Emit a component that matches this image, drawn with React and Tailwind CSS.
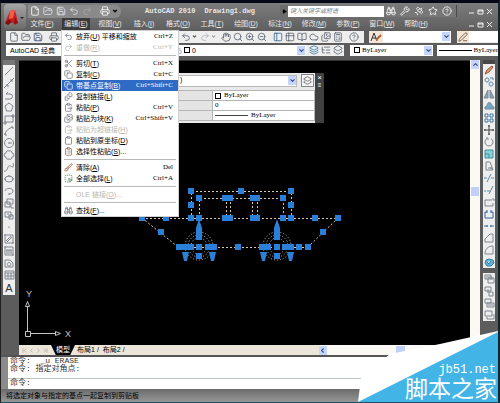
import React from 'react';
import {
  File, FolderOpen, Save, Printer, Undo2, Redo2, Hand, Search, ZoomIn, ZoomOut,
  Scissors, Copy, ClipboardPaste, Clipboard, ClipboardList, Brush, MousePointerSquareDashed,
  Wrench, Satellite, Star, CircleHelp, Binoculars, ChevronDown, ChevronUp, ChevronLeft,
  ChevronRight, ChevronFirst, ChevronLast, PanelLeft, Table2, BookOpen, Cloud, Images, Calculator,
  Layers, Layers2, ListTree, PenLine, LockOpen, FileStack, Play,
} from 'lucide-react';

const MENUS = [
  ['文件', 'F'], ['编辑', 'E'], ['视图', 'V'], ['插入', 'I'], ['格式', 'O'], ['工具', 'T'],
  ['绘图', 'D'], ['标注', 'N'], ['修改', 'M'], ['参数', 'P'], ['窗口', 'W'], ['帮助', 'H'],
];

const EDIT_MENU = [
  { icon: Undo2, label: '放弃', hot: 'U', after: ' 平移和缩放', keys: 'Ctrl+Z' },
  { icon: Redo2, label: '重做', hot: 'R', keys: 'Ctrl+Y', disabled: true },
  null,
  { icon: Scissors, label: '剪切', hot: 'T', keys: 'Ctrl+X' },
  { icon: Copy, label: '复制', hot: 'C', keys: 'Ctrl+C' },
  { icon: Copy, label: '带基点复制', hot: 'B', keys: 'Ctrl+Shift+C', active: true },
  { icon: FileStack, label: '复制链接', hot: 'L' },
  { icon: ClipboardPaste, label: '粘贴', hot: 'P', keys: 'Ctrl+V' },
  { icon: Images, label: '粘贴为块', hot: 'K', keys: 'Ctrl+Shift+V' },
  { icon: ClipboardPaste, label: '粘贴为超链接', hot: 'H', disabled: true },
  { icon: Clipboard, label: '粘贴到原坐标', hot: 'D' },
  { icon: ClipboardList, label: '选择性粘贴', hot: 'S', after: '...', tint: 'text-[#8a6a4a]' },
  null,
  { icon: Brush, label: '清除', hot: 'A', keys: 'Del', tint: 'text-[#a4512a]' },
  { icon: MousePointerSquareDashed, label: '全部选择', hot: 'L', keys: 'Ctrl+A', tint: 'text-[#3d7a3d]' },
  null,
  { label: 'OLE 链接', hot: 'O', after: '...', disabled: true },
  null,
  { icon: Binoculars, label: '查找', hot: 'F', after: '...' },
];

// every glyph sits in a 12x12 box
const DRAW_TOOLS = [
  ['直线', <path d="M2 10 10 2" />],
  ['构造线', <path d="M1 11 11 1M3 8h2v2M7 3h2v2" />],
  ['多段线', <path d="M2 10h5a2 2 0 0 0 0-5H3M3 5l2-2" />],
  ['正多边形', <path d="m6 2 4 3-1.5 5h-5L2 5z" />],
  ['矩形', <path d="M2 3h8v6H2zM1 9h2v2H1zM9 2h2v2H9z" />],
  ['圆弧', <path d="M2 10c0-4 4-7 8-8M1 9h2v2M9 1v2h2" />],
  ['圆', <path d="M6 1.5a4.5 4.5 0 1 0 .1 0M6 6h3M6 5v2" />],
  ['修订云线', <path d="M3 4a2 2 0 0 1 3-2 2 2 0 0 1 3 2 2 2 0 0 1 0 4 2 2 0 0 1-3 2 2 2 0 0 1-3-2 2 2 0 0 1 0-4" />],
  ['样条曲线', <path d="M1 10c3 1 3-2 4-4s3-1 4 0 2-2 1-4" />],
  ['椭圆', <path d="M2 6a4 3 0 1 0 8 0 4 3 0 1 0-8 0M6 2v2M1 6h2M9 6h2" />],
  ['椭圆弧', <path d="M2 6c0-3 8-4 8 0 0 2-2 3-4 3M6 8v2" />],
  ['插入块', <path d="M4 2h6v5H4zM2 5h5v5H2zM8 8v3h3" />],
  ['创建块', <path d="M2 3h6v5H2zM6 6h4v4H6zM4 5h2" />],
  ['点', <path d="M6 5.5v1.5" />],
  ['图案填充', <path d="M2 2h8v8H2zM3 8l5-5M4 9l5-5M1 2h2M9 10h2" />],
  ['渐变色', <path d="M2 2h8v8H2zM3 5h6M3 6h6M3 8h6M1 2h2M9 10h2" />],
  ['面域', <path d="M2 3h5l3 3v4H2zM6 5.5a1.8 1.8 0 1 0 .1 0" />],
  ['表格', <path d="M2 2h9v8H2zM2 4h9M2 7h9M5 4v6M8 4v6" />],
];

const MODIFY_TOOLS = [
  ['删除', <path d="m2 10 2-4 5-4 1 1-4 5z" fill="#d8a070" stroke="#9a5030" />],
  ['复制', <path d="M4 2a2 2 0 1 0 .1 0M8 6a2 2 0 1 0 .1 0M7 2h3v2" stroke="#56819f" />],
  ['镜像', <path d="M5 2v8H1zM7 2v8h4z" fill="#7fa8c4" />],
  ['偏移', <path d="M2 9V7l2-1c0-5 5-4 5 0l2 1v2z" fill="#6ba9c9" />],
  ['阵列', <path d="M2 2h3v3H2zM7 2h3v3H7zM2 7h3v3H2zM7 7h3v3H7z" stroke="#3a78a8" />],
  ['移动', <path d="M6 1v10M1 6h10M5 2h2M5 10h2M2 5v2M10 5v2" stroke="#444444" />],
  ['旋转', <path d="M4 2.5a4 4 0 1 0 4 0M4 1v2h2" />],
  ['缩放', <path d="M2 2h8v8H2zM2 6h4v4" fill="#8fd0d8" stroke="#3d8fa0" />],
  ['拉伸', <path d="M3 2h4l3 8H3zM5 8h4M8 7v2" />],
  ['修剪', <path d="M1 6h3M8 6h3M4 10l4-8" stroke="#5c86a6" />],
  ['延伸', <path d="M1 7h2M4 7h3M6 10l4-8" stroke="#5c86a6" />],
  ['打断于点', <path d="M9 4H2v6h8V7M9 3h2v2" />],
  ['打断', <path d="M4 4H2v6h8V4H8M4 2v3M8 2v3" stroke="#3b5ea0" />],
  ['合并', <path d="M1 6h4M11 6H7M4 5v2M8 5v2" stroke="#3b6fb0" />],
  ['倒角', <path d="M2 10V7l5-5h3v8z" />],
  ['圆角', <path d="M2 10c0-5 3-8 8-8v8z" />],
  ['分解', <path d="m2 7 1-3 3-1 4 1 1 3-3 3H4zM4 6l2 2 2-3" fill="#63b4d8" stroke="#2d80ac" />],
];

const ORDER_TOOLS = [
  ['前置', <path d="M2 2h6v4H2zM5 5h6v5H5zM3 4h6v3" />],
  ['后置', <path d="M2 2h6v4H2zM6 7h4v4H6zM5 4v4" />],
  ['置于对象之上', <path d="M2 2h6v4H2zM4 6h7v4H4zM5 8h5" />],
  ['置于对象之下', <path d="M2 2h7v5H2zM4 8v2h7V5" />],
];

const Palette = ({ tools, children }) => (
  <div className="w-3 bg-[#eeeeee] flex flex-col items-center">
    {tools.map(([name, glyph]) => (
      <button key={name} aria-label={name} className="w-3 h-3">
        <svg viewBox="0 0 12 12" className="w-3 h-3" fill="none" stroke="#7f858e">
          {glyph}
        </svg>
      </button>
    ))}
    {children}
  </div>
);

const Tool = ({ icon: Icon, name, className = 'text-[#5d6672]' }) => (
  <button aria-label={name} className={`w-3 h-3 flex items-center justify-center shrink-0 ${className}`}>
    <Icon size={10} strokeWidth={2} />
  </button>
);

const Arrow = ({ icon: Icon = ChevronDown }) => (
  <span className="w-2 h-[9px] shrink-0 bg-[#c6d5fb] text-[#3b5488] flex items-center justify-center">
    <Icon size={7} strokeWidth={4} />
  </span>
);

const Combo = ({ label, children, className = '' }) => (
  <button
    aria-label={label}
    className={`h-[11px] bg-white flex items-center gap-1 pl-1 pr-px text-left text-[7px] leading-none text-black ${className}`}
  >
    <span className="flex-1 min-w-0 flex items-center gap-0.5 whitespace-nowrap overflow-hidden">{children}</span>
    <Arrow />
  </button>
);

const LATIN = "font-['Liberation_Serif','Noto_Sans_CJK_SC',serif]";

const Header = () => (
  <header className="flex bg-linear-to-b from-[#7c7c7c] via-[#6e6e6e] to-[#5f5f5f] h-[27px] pl-[3px] pt-px text-[#e8e8e8]">
    <button aria-label="应用程序菜单" className="w-[22px] h-[25px] bg-linear-to-b from-[#a5a5a5] to-[#6c6c6c] flex items-center justify-center rounded-sm">
      <svg viewBox="0 0 20 22" className="w-5 h-[22px]">
        <path d="M0 17 5 5l5-1 3 13-3 2-3-3-3 1-1 2z" fill="#c81e1e" />
        <path d="M5 5 4 13l4-1 2-8z" fill="#f25c4c" />
        <path d="m0 17 4-4 3 3-4 3z" fill="#7d0f12" />
        <path d="m9 18 1-7 3 6z" fill="#8e1216" />
        <path d="M15 11h4l-2 2z" fill="#222" />
      </svg>
    </button>
    <div className="flex-1 min-w-0 flex flex-col">
      <div className="flex items-center h-[14px] pr-1">
        <div className="flex items-center gap-px w-[93px] h-[13px] ml-0.5 pl-px bg-[#8a8a8a] rounded-r-md">
          <Tool icon={File} name="新建" className="text-white" />
          <Tool icon={FolderOpen} name="打开" className="text-[#dfe6ee]" />
          <Tool icon={Save} name="保存" className="text-[#e3e8f4]" />
          <Tool icon={Undo2} name="放弃" className="text-[#e0e0e0]" />
          <Tool icon={Redo2} name="重做" className="text-[#aaaaaa]" />
          <span className="w-1" />
          <Tool icon={Printer} name="打印" className="text-white" />
          <ChevronDown size={6} strokeWidth={5} className="text-black" />
        </div>
        <h1 className="flex-1 flex gap-[9px] pl-[24px] text-[7px] leading-none font-bold whitespace-nowrap font-['Liberation_Mono',monospace]">
          <span>AutoCAD 2010</span>
          <span>Drawing1.dwg</span>
        </h1>
        <div className="flex items-center">
          <button aria-label="展开搜索" className="w-2 h-3 bg-[#6c6c6c] text-black flex items-center justify-center">
            <Play size={5} fill="black" />
          </button>
          <input
            aria-label="搜索"
            placeholder="键入关键字或短语"
            className="w-[96px] h-[11px] bg-white pl-0.5 italic text-[6px] leading-none text-black placeholder:text-[#808080] outline-none"
          />
          <div className="flex items-center gap-0.5 h-3 w-[73px] pl-px bg-[#777777] border-r border-[#4a4a4a]">
            <Tool icon={Binoculars} name="查找" className="text-white" />
            <Tool icon={Wrench} name="速博中心" className="text-white" />
            <Tool icon={Satellite} name="通讯中心" className="text-white" />
            <Tool icon={Star} name="收藏夹" className="text-white" />
            <Tool icon={CircleHelp} name="帮助" className="text-white" />
          </div>
        </div>
        <WindowButtons className="ml-2.5" />
      </div>
      <nav className="flex items-center h-3 pr-1">
        {MENUS.map(([label, hot]) => (
          <div key={label} className="relative flex h-3 w-[34px]">
            <button
              className={`w-[28px] h-3 ml-0.5 text-[7px] leading-[12px] whitespace-nowrap ${label === '编辑' ? 'bg-[#3b3b3b]' : ''}`}
            >
              {label}(<u>{hot}</u>)
            </button>
            {label === '编辑' && <EditMenu />}
          </div>
        ))}
        <WindowButtons className="ml-auto" />
      </nav>
    </div>
  </header>
);

const WindowButtons = ({ className }) => (
  <div className={`flex items-center ${className}`}>
    {[
      ['最小化', 'M2 6h5'],
      ['还原', 'M2 3h5v4H2zM2 4h5'],
      ['关闭', 'm2 2 5 5M7 2 2 7'],
    ].map(([name, d]) => (
      <button key={name} aria-label={name} className="w-[9px] h-[9px]">
        <svg viewBox="0 0 9 9" className="w-[9px] h-[9px]" fill="none" stroke="#f2f2f2">
          <path d={d} />
        </svg>
      </button>
    ))}
  </div>
);

const EditMenu = () => (
  <div role="menu" className="absolute z-20 left-px top-3 w-[118px] bg-white border border-[#d0d0d0] text-black">
    {EDIT_MENU.map((item, i) => {
      if (!item) return <hr key={i} className="my-0.5 mx-0.5 border-t border-[#b9b9b9]" />;
      const { icon: Icon, label, hot, after, keys, disabled, active, tint = 'text-[#6b7178]' } = item;
      return (
        <button
          key={i}
          role="menuitem"
          disabled={disabled}
          className={`w-full h-[11px] flex items-center pl-0.5 pr-[5px] text-[7px] leading-[11px] whitespace-nowrap ${
            active ? 'bg-[#2f6ac4] text-white' : disabled ? 'text-[#b8b8b0]' : ''
          }`}
        >
          <span className={`w-3 flex justify-start ${active || disabled ? '' : tint}`}>
            {Icon && <Icon size={9} strokeWidth={2} />}
          </span>
          <span>
            {label}(<u>{hot}</u>){after}
          </span>
          <span className={`ml-auto ${LATIN}`}>{keys}</span>
        </button>
      );
    })}
  </div>
);

const StandardBar = () => (
  <div className="flex items-center h-[13px] pl-[5px]">
    <div className="flex items-center w-[358px] h-3 bg-[#eeeeee] pl-0.5 pr-1">
      <Tool icon={File} name="新建" />
      <Tool icon={FolderOpen} name="打开" />
      <Tool icon={Save} name="保存" className="text-[#3d5379]" />
      <span className="w-1" />
      <Tool icon={Printer} name="打印" />
      <span className="flex-1" />
      <Tool icon={Undo2} name="放弃" />
      <ChevronDown size={5} strokeWidth={5} className="text-[#444444]" />
      <span className="w-0.5" />
      <Tool icon={Redo2} name="重做" className="text-[#b0b4ba]" />
      <ChevronDown size={5} strokeWidth={5} className="text-[#999999]" />
      <span className="w-1" />
      <Tool icon={Hand} name="实时平移" />
      <Tool icon={Search} name="实时缩放" />
      <Tool icon={ZoomIn} name="窗口缩放" />
      <Tool icon={ZoomOut} name="缩放上一个" />
      <span className="w-1" />
      <Tool icon={PanelLeft} name="特性" className="text-[#3a6797]" />
      <Tool icon={Table2} name="设计中心" />
      <Tool icon={BookOpen} name="工具选项板" />
      <Tool icon={Cloud} name="图纸集" />
      <Tool icon={Images} name="标记集" />
      <Tool icon={Calculator} name="快速计算器" />
      <span className="w-1" />
      <Tool icon={CircleHelp} name="帮助" />
    </div>
    <div className="flex-1 flex items-center h-3 ml-[5px] bg-[#eeeeee]">
      <button aria-label="文字样式管理" className="w-[14px] h-3 flex items-center justify-center bg-[#f3e6d8]">
        <svg viewBox="0 0 12 12" className="w-3 h-3" fill="none" stroke="#333333">
          <path d="m1 10 3-8 3 8M2 7h4" />
          <path d="m6 9 5-5" stroke="#a0623a" strokeWidth="2" />
        </svg>
      </button>
      <Combo label="文字样式" className="flex-1" />
      <span className="w-1.5 h-3 bg-[#5c5c5c]" />
      <Tool icon={PenLine} name="标注样式" className="bg-[#f3e6d8] text-[#6b4b3a]" />
      <span className="w-[29px] h-[11px] bg-white" />
    </div>
  </div>
);

const LayerBar = () => (
  <div className="flex items-center h-[14px] pl-[5px]">
    <Combo label="工作空间" className="w-[120px]">AutoCAD 经典</Combo>
    <Combo label="图层" className="w-[178px] ml-0.5">
      <span className="w-[41px]" />
      <LockOpen size={7} className="text-[#4e82a4]" />
      <span className="w-[6px] h-[6px] border border-black" />
      <span>0</span>
    </Combo>
    <div className="flex items-center h-[11px] bg-[#eeeeee] pl-0.5">
      <Tool icon={Layers} name="图层特性" className="text-[#3f7ba2]" />
      <Tool icon={ListTree} name="上一个图层" />
      <Tool icon={Layers2} name="图层状态" />
    </div>
    <Combo label="颜色" className={`ml-1.5 flex-4 ${LATIN}`}>
      <span className="w-[6px] h-[6px] border border-black" />
      <span>ByLayer</span>
    </Combo>
    <button aria-label="线型" className={`ml-1 flex-3 h-[11px] bg-white flex items-center gap-0.5 pl-0.5 text-[7px] leading-none text-black overflow-hidden ${LATIN}`}>
      <span className="flex-1 h-px bg-black" />
      <span>ByLayer</span>
    </button>
  </div>
);

const PropertiesPanel = () => (
  <section className="absolute left-[100px] top-3 w-[205px] h-[50px] flex bg-[#e9e9e9] text-black">
    <div className="flex-1 flex flex-col">
      <div className="flex items-center gap-1 h-[15px] pr-px">
        <button className="flex-1 h-3 bg-white border border-[#bbbbbb] flex items-center justify-end pl-[60px] text-[7px]">
          <span className="flex-1 text-left">)</span>
          <Arrow />
        </button>
        <button aria-label="快速选择" className="w-[13px] h-[13px] border border-[#888888] bg-[#f5f5f5] flex items-center justify-center text-[#555555]">
          <Layers2 size={9} />
        </button>
      </div>
      <table className={`mt-0.5 w-full border-collapse text-[7px] leading-[9px] ${LATIN}`}>
        <tbody>
          {['ByLayer', '0', 'ByLayer'].map((value, i) => (
            <tr key={i} className="h-[10px]">
              <td className="w-[93px] p-0 border border-[#b5b5b5] bg-[#e4e4e4]" />
              <td className="p-0 pl-0.5 border border-[#b5b5b5] bg-white">
                <span className="flex items-center gap-[3px]">
                  {i === 0 && <span className="w-[6px] h-[6px] border border-black" />}
                  {i === 2 && <span className="w-[33px] h-px bg-[#444444]" />}
                  {value}
                </span>
              </td>
            </tr>
          ))}
        </tbody>
      </table>
    </div>
    <div className="w-[9px] bg-[#414141] text-white flex flex-col items-center">
      <button aria-label="关闭特性" className="text-[8px] leading-[9px]">×</button>
      <span className="text-[6px] leading-[6px]">≡</span>
    </div>
  </section>
);

const GRIPS = [
  [191, 191], [241, 191], [291, 191], [191, 205], [291, 205], [191, 218], [291, 218],
  [199, 198], [283, 198], [199, 218], [283, 218], [142, 218], [166, 218], [315, 218], [338, 218],
  [161, 232], [323, 232], [199, 247], [238, 247], [277, 247], [299, 247], [308, 247],
  [199, 256], [277, 256],
];
const WIDE_GRIPS = [
  [222, 195, 11], [250, 195, 10], [222, 215, 11], [250, 215, 10],
  [176, 244, 18], [205, 244, 12], [259, 244, 12], [282, 244, 12],
];

const CarDrawing = () => (
  <svg viewBox="130 180 220 90" className="absolute left-[111px] top-[119px] w-[220px] h-[90px]">
    <g fill="none" stroke="#d8c8b0" strokeDasharray="2 2" shapeRendering="crispEdges">
      <path d="M191 218.500V191.500h100v27M199.500 218v-19.500h84V218M142 218.500h196M226.500 198v20M230.500 198v20M252.500 198v20M257.500 198v20M178 247.500h130" />
    </g>
    <path d="m142 218 36 29M338 218l-30 29" stroke="#d8c8b0" strokeDasharray="2 2" />
    {[199, 277].map((x) => (
      <g key={x}>
        <g fill="none" stroke="#c8c8c8" strokeDasharray="1 2">
          <circle cx={x} cy="246" r="14" />
          <circle cx={x} cy="246" r="11" />
          <circle cx={x} cy="246" r="8" />
        </g>
        <path d={`M${x} 219l3 9v12h-6v-12z`} fill="#2a7fd8" />
        <path d={`M${x - 17} 252h7l-2 9h-3zM${x + 10} 252h7l-2 9h-3z`} fill="#2a7fd8" />
      </g>
    ))}
    {GRIPS.map(([x, y]) => (
      <rect key={`${x}-${y}`} x={x - 3} y={y - 3} width="6" height="6" fill="#2a7fd8" />
    ))}
    {WIDE_GRIPS.map(([x, y, w]) => (
      <rect key={`${x}-${y}`} x={x} y={y} width={w} height="6" fill="#2a7fd8" />
    ))}
  </svg>
);

const UcsIcon = () => (
  <svg viewBox="0 0 52 54" className="absolute left-1 bottom-1 w-[52px] h-[54px]" fill="none" stroke="#c4c4c4">
    <path d="M2.500 44.500h5v5h-5zM4.500 44V20M8 46.500h24M4.500 14.500l2 5h-4zM37.500 46.500l-5-2v4z" />
    <g fill="#c4c4c4" stroke="none" fontSize="9" fontFamily="Liberation Sans, sans-serif">
      <text x="3" y="10">Y</text>
      <text x="42" y="50">X</text>
    </g>
  </svg>
);

const LayoutTabs = () => (
  <div className="flex h-[10px] bg-[#ece6da] text-[7px] leading-[10px] text-black">
    <div className="flex items-center pl-0.5 text-[#999999]">
      {[ChevronFirst, ChevronLeft, ChevronRight, ChevronLast].map((Icon, i) => (
        <button key={i} aria-label={`标签滚动 ${i + 1}`} className="w-[7px]">
          <Icon size={7} />
        </button>
      ))}
    </div>
    <button className="w-[24px] ml-0.5 bg-black text-white [clip-path:polygon(0_0,100%_0,80%_100%,20%_100%)]">模型</button>
    <button className="ml-0.5">布局1</button>
    <span className="px-0.5">/</span>
    <button className="ml-0.5">布局2</button>
    <span className="px-0.5">/</span>
    <div className="ml-auto flex items-center w-[35%] bg-[#faf9f4]">
      <Arrow icon={ChevronLeft} />
      <span className="w-[9px] h-2 ml-[43%] bg-[#c2d0f8]" />
    </div>
  </div>
);

const CommandPanel = () => (
  <section className="flex bg-white border-t-2 border-[#555555] text-[8px] leading-[8px] text-[#333333] font-['Liberation_Mono','Noto_Sans_CJK_SC',monospace]">
    <div className="w-[7px] bg-[#8b8b8b]" />
    <div className="flex-1">
      <div className="h-[22px] pl-0.5 whitespace-pre border-b border-[#b8c4bc]">
        <p>命令:  _u ERASE</p>
        <p>命令: 指定对角点:</p>
      </div>
      <label className="flex h-[10px] pl-0.5">
        命令:
        <input className="flex-1 min-w-0 pl-1 outline-none" />
      </label>
    </div>
  </section>
);

const Watermark = () => (
  <div className="absolute right-0 bottom-0 w-[140px] h-[72px] text-white text-right whitespace-nowrap">
    <svg viewBox="358 330 140 72" className="absolute inset-0 w-[140px] h-[72px]">
      <path d="m358 402 3-24 29-24 50-10 58-13v71z" fill="#ffffff" />
      <path d="m358 402 140-70v70z" fill="#42b4e6" />
    </svg>
    <a href="#jb51" className="relative block pt-[33px] pr-0.5 text-[12px] leading-[14px] font-['Liberation_Mono',monospace]">jb51.net</a>
    <p className="relative pr-px text-[23px] leading-[24px]">脚本之家</p>
  </div>
);

export default function App() {
  return (
    <div className="relative min-h-screen flex flex-col bg-[#5c5c5c] border-t-[3px] border-t-[#060818] border-l border-l-[#202020] border-r-2 border-r-[#12242c] border-b border-b-[#205064] font-['Liberation_Sans','Noto_Sans_CJK_SC',sans-serif]">
      <Header />
      <StandardBar />
      <LayerBar />
      <main className="flex-1 flex pl-0.5 pt-[3px]">
        <div className="flex flex-col">
          <div className="h-[5px] bg-[#777777]" />
          <Palette tools={DRAW_TOOLS}>
            <button aria-label="多行文字" className="w-3 h-[14px] text-[11px] leading-[14px] text-[#333333]">A</button>
          </Palette>
        </div>
        <div className="ml-1 flex-1 flex flex-col">
          <div className="flex-1 flex">
            <div className="relative flex-1 bg-black overflow-hidden border-t border-[#333333]">
              <PropertiesPanel />
              <CarDrawing />
              <UcsIcon />
            </div>
            <div className="w-[10px] bg-[#faf9f4] flex flex-col items-center">
              <Arrow icon={ChevronUp} />
              <span className="mt-[118px] w-2 h-[9px] bg-[#c2d0f8]" />
            </div>
          </div>
          <LayoutTabs />
        </div>
        <div className="ml-[3px] mr-[3px] flex flex-col gap-[5px]">
          <div>
            <div className="h-1 bg-[#474747]" />
            <Palette tools={MODIFY_TOOLS} />
          </div>
          <Palette tools={ORDER_TOOLS} />
        </div>
      </main>
      <CommandPanel />
      <footer className="h-[13px] pl-[5px] bg-linear-to-b from-[#6c6c6c] to-[#969696] text-[7px] leading-[13px] text-black">
        将选定对象与指定的基点一起复制到剪贴板
      </footer>
      <Watermark />
    </div>
  );
}
